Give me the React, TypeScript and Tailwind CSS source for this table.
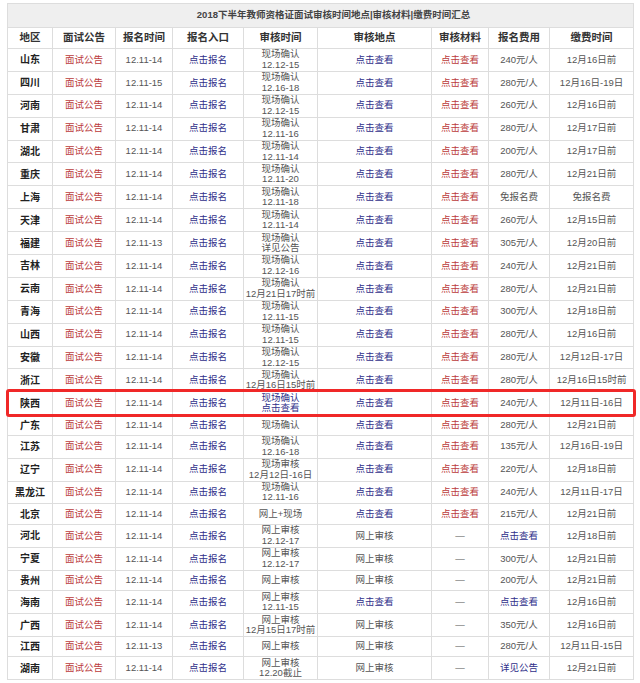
type Tone = "text" | "red" | "blue";

interface Cell {
  lines: string[];
  tone?: Tone;
}

interface Row {
  region: string;
  signup: string;
  review: Cell;
  place: Cell;
  material: Cell;
  fee: Cell;
  payTime: string;
  tall?: boolean;
}

const t = (...lines: string[]): Cell => ({ lines, tone: "text" });
const red = (s: string): Cell => ({ lines: [s], tone: "red" });
const blue = (s: string): Cell => ({ lines: [s], tone: "blue" });

const onSite = (
  region: string,
  signup: string,
  review: Cell,
  fee: string,
  payTime: string,
  tall = true
): Row => ({
  region,
  signup,
  review,
  place: blue("点击查看"),
  material: red("点击查看"),
  fee: t(fee),
  payTime,
  tall,
});

const online = (
  region: string,
  signup: string,
  review: Cell,
  place: Cell,
  fee: Cell,
  payTime: string,
  tall = true
): Row => ({
  region,
  signup,
  review,
  place,
  material: t("—"),
  fee,
  payTime,
  tall,
});

const rows: Row[] = [
  onSite("山东", "12.11-14", t("现场确认", "12.12-15"), "240元/人", "12月16日前"),
  onSite("四川", "12.11-15", t("现场确认", "12.16-18"), "280元/人", "12月16日-19日"),
  onSite("河南", "12.11-14", t("现场确认", "12.12-15"), "260元/人", "12月16日前"),
  onSite("甘肃", "12.11-14", t("现场确认", "12.11-16"), "280元/人", "12月17日前"),
  onSite("湖北", "12.11-14", t("现场确认", "12.11-14"), "200元/人", "12月17日前"),
  onSite("重庆", "12.11-14", t("现场确认", "12.11-20"), "280元/人", "12月21日前"),
  onSite("上海", "12.11-14", t("现场确认", "12.11-18"), "免报名费", "免报名费"),
  onSite("天津", "12.11-14", t("现场确认", "12.11-14"), "260元/人", "12月15日前"),
  onSite("福建", "12.11-13", t("现场确认", "详见公告"), "305元/人", "12月20日前"),
  onSite("吉林", "12.11-14", t("现场确认", "12.12-16"), "240元/人", "12月21日前"),
  onSite("云南", "12.11-14", t("现场确认", "12月21日17时前"), "280元/人", "12月21日前"),
  onSite("青海", "12.11-14", t("现场确认", "12.11-15"), "300元/人", "12月18日前"),
  onSite("山西", "12.11-14", t("现场确认", "12.11-15"), "280元/人", "12月16日前"),
  onSite("安徽", "12.11-14", t("现场确认", "12.12-15"), "280元/人", "12月12日-17日"),
  onSite("浙江", "12.11-14", t("现场确认", "12月16日15时前"), "280元/人", "12月16日15时前"),
  onSite("陕西", "12.11-14", { lines: ["现场确认", "点击查看"], tone: "blue" }, "240元/人", "12月11日-16日"),
  onSite("广东", "12.11-14", t("现场确认"), "280元/人", "12月21日前", false),
  onSite("江苏", "12.11-14", t("现场确认", "12.16-18"), "135元/人", "12月16日-19日"),
  onSite("辽宁", "12.11-14", t("现场审核", "12月12日-16日"), "220元/人", "12月18日前"),
  onSite("黑龙江", "12.11-14", t("现场确认", "12.11-16"), "240元/人", "12月11日-17日"),
  onSite("北京", "12.11-14", t("网上+现场"), "215元/人", "12月21日前", false),
  online("河北", "12.11-14", t("网上审核", "12.12-17"), t("网上审核"), blue("点击查看"), "12月18日前"),
  online("宁夏", "12.11-14", t("网上审核", "12.12-17"), t("网上审核"), t("300元/人"), "12月21日前"),
  online("贵州", "12.11-14", t("网上审核"), t("网上审核"), t("200元/人"), "12月21日前", false),
  online("海南", "12.11-14", t("网上审核", "12.11-15"), blue("点击查看"), blue("点击查看"), "12月16日前"),
  online("广西", "12.11-14", t("网上审核", "12月15日17时前"), t("网上审核"), t("350元/人"), "12月16日前"),
  online("江西", "12.11-13", t("网上审核"), t("网上审核"), t("280元/人"), "12月11日-15日", false),
  online("湖南", "12.11-14", t("网上审核", "12.20截止"), t("网上审核"), blue("详见公告"), "12月21日前"),
];

const toneClass: Record<Tone, string> = {
  text: "text-[#555555]",
  red: "text-[#bb3b3b]",
  blue: "text-[#2f2f8a]",
};

function Td({ cell }: { cell: Cell }) {
  return (
    <td className="border border-[#dddddd] p-0 text-center align-middle overflow-hidden">
      <div className={`leading-[10.5px] whitespace-nowrap ${toneClass[cell.tone ?? "text"]}`}>
        {cell.lines.map((line, i) => (
          <div key={i}>{line}</div>
        ))}
      </div>
    </td>
  );
}

const headers = ["地区", "面试公告", "报名时间", "报名入口", "审核时间", "审核地点", "审核材料", "报名费用", "缴费时间"];

export default function App() {
  return (
    <div
      className="min-h-screen bg-white pt-[3px] pl-[7px] text-[9.5px]"
      style={{ fontFamily: '"Liberation Sans", "Noto Sans CJK SC", sans-serif' }}
    >
      <div className="relative w-[626px]">
        <table className="w-[626px] table-fixed border-collapse border border-[#cfcfcf]">
          <colgroup>
            <col className="w-[45px]" />
            <col className="w-[63px]" />
            <col className="w-[57px]" />
            <col className="w-[71px]" />
            <col className="w-[74px]" />
            <col className="w-[114px]" />
            <col className="w-[57px]" />
            <col className="w-[61px]" />
            <col className="w-[84px]" />
          </colgroup>
          <thead>
            <tr className="h-[24px] bg-[#efefef]">
              <th
                colSpan={9}
                className="border border-[#dddddd] pl-[26px] text-center text-[9.5px] font-bold text-[#444444]"
              >
                2018下半年教师资格证面试审核时间地点|审核材料|缴费时间汇总
              </th>
            </tr>
            <tr className="h-[21px]">
              {headers.map((h) => (
                <th key={h} className="border border-[#dddddd] p-0 text-center text-[10.5px] font-bold text-[#333333]">
                  {h}
                </th>
              ))}
            </tr>
          </thead>
          <tbody>
            {rows.map((r) => (
              <tr key={r.region} className={r.tall ? "h-[22.9px]" : "h-[20.5px]"}>
                <td className="border border-[#dddddd] p-0 text-center text-[10px] font-bold text-[#222222]">
                  {r.region}
                </td>
                <Td cell={red("面试公告")} />
                <Td cell={t(r.signup)} />
                <Td cell={blue("点击报名")} />
                <Td cell={r.review} />
                <Td cell={r.place} />
                <Td cell={r.material} />
                <Td cell={r.fee} />
                <Td cell={t(r.payTime)} />
              </tr>
            ))}
          </tbody>
        </table>
        <div className="pointer-events-none absolute left-[-1px] top-[386px] h-[28px] w-[630px] rounded-[3px] border-[3px] border-[#f02828]" />
      </div>
    </div>
  );
}
